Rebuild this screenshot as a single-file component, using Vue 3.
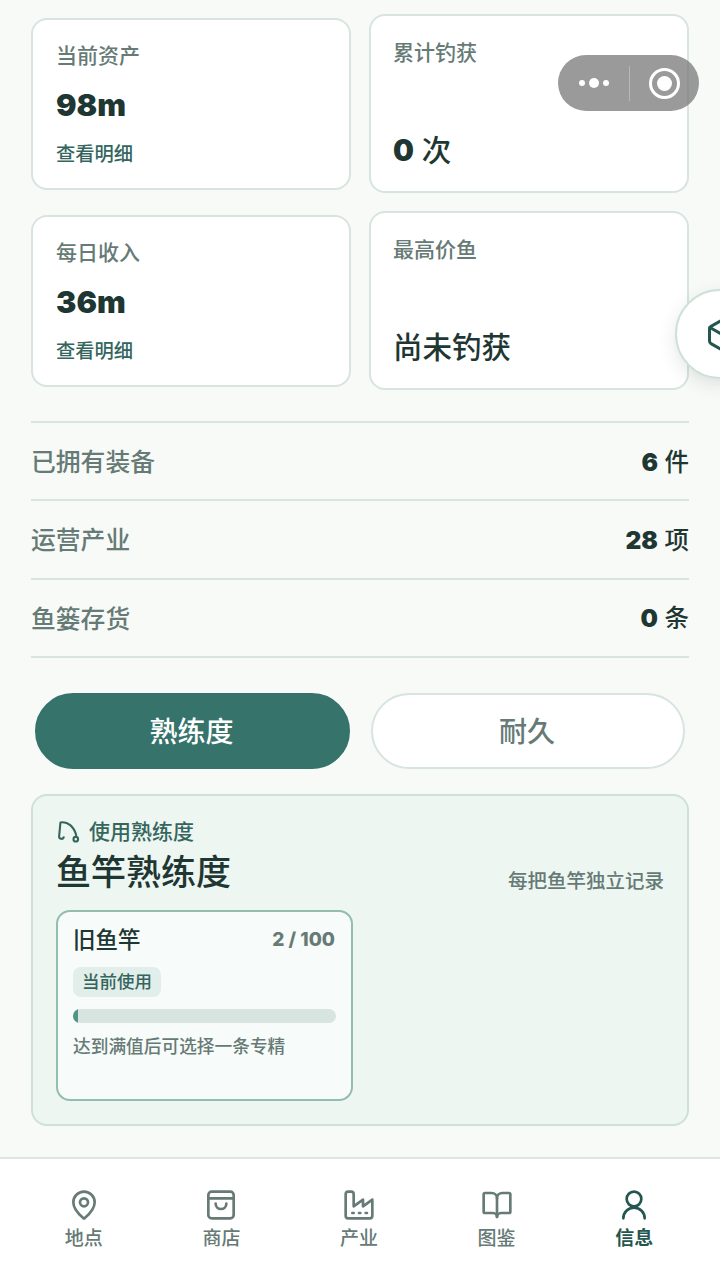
<template>
  <div class="page">
    <main class="content">
      <section class="stats">
        <div class="col col-left">
          <div v-for="item in leftCards" :key="item.label" class="card card-left">
            <div class="card-label">{{ item.label }}</div>
            <div class="card-money">{{ item.value }}</div>
            <div class="card-link">查看明细</div>
          </div>
        </div>
        <div class="col col-right">
          <div class="card card-right">
            <div class="card-label">累计钓获</div>
            <div class="card-big"><b>0</b> 次</div>
          </div>
          <div class="card card-right">
            <div class="card-label">最高价鱼</div>
            <div class="card-big">尚未钓获</div>
          </div>
        </div>
      </section>

      <section class="rows">
        <div v-for="row in rows" :key="row.label" class="row">
          <span class="row-label">{{ row.label }}</span>
          <span class="row-value"><b>{{ row.num }}</b> {{ row.unit }}</span>
        </div>
      </section>

      <section class="tabs">
        <div class="tab active">熟练度</div>
        <div class="tab">耐久</div>
      </section>

      <section class="panel">
        <div class="panel-head">
          <div>
            <div class="eyebrow">
              <svg class="hook" viewBox="0 0 24 24" fill="none" stroke="currentColor" stroke-width="2.2" stroke-linecap="round" stroke-linejoin="round">
                <path d="M7 18c-1 2.6-4.8 2-4.8-.8L3.6 2.6C11 1 18 7 20 16" />
                <circle cx="19.6" cy="20" r="2.4" />
              </svg>
              <span>使用熟练度</span>
            </div>
            <div class="panel-title">鱼竿熟练度</div>
          </div>
          <div class="panel-note">每把鱼竿独立记录</div>
        </div>

        <div class="rod">
          <div class="rod-top">
            <span class="rod-name">旧鱼竿</span>
            <span class="rod-count">2 / 100</span>
          </div>
          <span class="chip">当前使用</span>
          <div class="bar">
            <div class="bar-fill" :style="{ width: progress + '%' }"></div>
          </div>
          <div class="rod-hint">达到满值后可选择一条专精</div>
        </div>
      </section>
    </main>

    <nav class="nav">
      <div class="nav-item">
        <svg viewBox="0 0 24 24" fill="none" stroke="currentColor" stroke-width="2" stroke-linecap="round" stroke-linejoin="round">
          <path d="M20 10c0 5-5.5 10.2-7.4 11.8a1 1 0 0 1-1.2 0C9.5 20.2 4 15 4 10a8 8 0 0 1 16 0" />
          <circle cx="12" cy="10" r="3" />
        </svg>
        <span>地点</span>
      </div>
      <div class="nav-item">
        <svg viewBox="0 0 24 24" fill="none" stroke="currentColor" stroke-width="2" stroke-linecap="round" stroke-linejoin="round">
          <rect x="2.5" y="2" width="19" height="20" rx="2.5" />
          <path d="M2.5 7h19" />
          <path d="M16 11a4 4 0 0 1-8 0" />
        </svg>
        <span>商店</span>
      </div>
      <div class="nav-item">
        <svg viewBox="0 0 24 24" fill="none" stroke="currentColor" stroke-width="2" stroke-linecap="round" stroke-linejoin="round">
          <path d="M2 20a2 2 0 0 0 2 2h16a2 2 0 0 0 2-2V8l-7 5V8l-7 5V4a2 2 0 0 0-2-2H4a2 2 0 0 0-2 2Z" />
          <path d="M17 18h1M12 18h1M7 18h1" />
        </svg>
        <span>产业</span>
      </div>
      <div class="nav-item">
        <svg viewBox="0 0 24 24" fill="none" stroke="currentColor" stroke-width="2" stroke-linecap="round" stroke-linejoin="round">
          <path d="M12 7v14" />
          <path d="M3 18a1 1 0 0 1-1-1V4a1 1 0 0 1 1-1h5a4 4 0 0 1 4 4 4 4 0 0 1 4-4h5a1 1 0 0 1 1 1v13a1 1 0 0 1-1 1h-6a3 3 0 0 0-3 3 3 3 0 0 0-3-3z" />
        </svg>
        <span>图鉴</span>
      </div>
      <div class="nav-item on">
        <svg viewBox="0 0 24 24" fill="none" stroke="currentColor" stroke-width="2" stroke-linecap="round" stroke-linejoin="round">
          <path d="M20 22a8 8 0 0 0-16 0" />
          <circle cx="12" cy="7.5" r="5.5" />
        </svg>
        <span>信息</span>
      </div>
    </nav>

    <!-- wechat capsule sits over the page -->
    <div class="capsule">
      <div class="capsule-dots"><i></i><i class="mid"></i><i></i></div>
      <div class="capsule-line"></div>
      <div class="capsule-ring"><i></i></div>
    </div>

    <div class="fab">
      <svg viewBox="0 0 24 24" fill="none" stroke="currentColor" stroke-width="2" stroke-linecap="round" stroke-linejoin="round">
        <path d="M21 8a2 2 0 0 0-1-1.73l-7-4a2 2 0 0 0-2 0l-7 4A2 2 0 0 0 3 8v8a2 2 0 0 0 1 1.73l7 4a2 2 0 0 0 2 0l7-4A2 2 0 0 0 21 16Z" />
        <path d="m3.3 7 8.7 5 8.7-5" />
        <path d="M12 22V12" />
      </svg>
    </div>
  </div>
</template>

<script setup>
const leftCards = [
  { label: '当前资产', value: '98m' },
  { label: '每日收入', value: '36m' },
]

const rows = [
  { label: '已拥有装备', num: '6', unit: '件' },
  { label: '运营产业', num: '28', unit: '项' },
  { label: '鱼篓存货', num: '0', unit: '条' },
]

const progress = 2
</script>

<style>
html,
body {
  margin: 0;
  background: #f8faf8;
}
</style>

<style scoped>
.page {
  position: relative;
  width: 720px;
  height: 1280px;
  overflow: hidden;
  display: flex;
  flex-direction: column;
  background: #f8faf8;
  color: #1f3733;
  font-family: Inter, "Noto Sans CJK SC", sans-serif;
}

.content {
  flex: 1;
  padding: 0 31px;
}

/* stat cards */
.stats {
  display: grid;
  grid-template-columns: 320px 320px;
  column-gap: 18px;
}

.col {
  display: flex;
  flex-direction: column;
}

.col-left {
  padding-top: 18px;
  gap: 25px;
}

.col-right {
  padding-top: 14px;
  gap: 18px;
}

.card {
  box-sizing: border-box;
  background: #fff;
  border: 2px solid #d7e4df;
  border-radius: 16px;
  display: flex;
  flex-direction: column;
}

.card-left {
  height: 172px;
  padding: 21.5px 23px 0;
}

.card-right {
  height: 179px;
  padding: 22.5px 22px 0;
}

.card-label {
  font-size: 21px;
  line-height: 28px;
  font-weight: 500;
  color: #667a76;
}

.card-money {
  margin-top: 16px;
  font-size: 30.5px;
  line-height: 38px;
  font-weight: 900;
}

.card-link {
  margin-top: 17px;
  font-size: 19.3px;
  line-height: 26px;
  font-weight: 500;
  color: #35665e;
}

.card-big {
  margin-top: auto;
  margin-bottom: 21px;
  font-size: 29.5px;
  line-height: 40px;
  font-weight: 500;
}

.card-big b {
  font-weight: 900;
}

/* summary rows */
.rows {
  margin-top: 31px;
  border-top: 2px solid #d8e4df;
}

.row {
  box-sizing: border-box;
  height: 78.25px;
  padding-bottom: 2px;
  display: flex;
  align-items: center;
  justify-content: space-between;
  border-bottom: 2px solid #d8e4df;
}

.row-label {
  font-size: 24.8px;
  font-weight: 500;
  color: #667a76;
}

.row-value {
  font-size: 24.5px;
  font-weight: 500;
}

.row-value b {
  font-weight: 900;
}

/* tabs */
.tabs {
  margin-top: 35px;
  padding: 0 4px;
  display: grid;
  grid-template-columns: 315px 314px;
  column-gap: 21px;
}

.tab {
  box-sizing: border-box;
  height: 76px;
  padding: 0 2px 2px 0;
  border-radius: 38px;
  display: flex;
  align-items: center;
  justify-content: center;
  background: #fff;
  border: 2px solid #d7e4df;
  color: #667a76;
  font-size: 28px;
  font-weight: 500;
}

.tab.active {
  background: #35736b;
  border-color: #35736b;
  color: #fff;
}

/* rod panel */
.panel {
  box-sizing: border-box;
  height: 332px;
  margin-top: 25px;
  padding: 22px 23px 0;
  background: #eef6f2;
  border: 2px solid #cfe0d9;
  border-radius: 16px;
}

.panel-head {
  display: flex;
  justify-content: space-between;
  align-items: flex-end;
}

.eyebrow {
  margin-left: 1px;
  display: flex;
  align-items: center;
  gap: 9px;
  font-size: 21px;
  line-height: 28px;
  font-weight: 500;
  color: #35665e;
}

.hook {
  width: 23px;
  height: 23px;
}

.panel-title {
  margin-top: 1px;
  font-size: 35px;
  line-height: 50px;
  font-weight: 500;
}

.panel-note {
  margin-bottom: 2px;
  font-size: 19.5px;
  line-height: 28px;
  font-weight: 500;
  color: #667a76;
}

.rod {
  box-sizing: border-box;
  width: 297px;
  height: 191px;
  margin-top: 13px;
  padding: 11px 15px 0;
  background: #f7fbf9;
  border: 2px solid #93bdb0;
  border-radius: 14px;
}

.rod-top {
  display: flex;
  align-items: center;
  justify-content: space-between;
}

.rod-name {
  font-size: 22.5px;
  line-height: 34px;
  font-weight: 500;
}

.rod-count {
  margin-right: 1px;
  font-size: 19px;
  font-weight: 800;
  color: #667a76;
}

.chip {
  display: inline-block;
  margin-top: 10px;
  padding: 0 9px;
  height: 30px;
  line-height: 30px;
  border-radius: 8px;
  background: #e2eeea;
  font-size: 17.5px;
  font-weight: 500;
  color: #35665e;
}

.bar {
  height: 14px;
  margin-top: 12px;
  border-radius: 7px;
  background: #d8e4df;
  overflow: hidden;
}

.bar-fill {
  height: 100%;
  background: #4f9585;
}

.rod-hint {
  margin-top: 11px;
  font-size: 17.7px;
  line-height: 26px;
  font-weight: 500;
  color: #667a76;
}

/* bottom nav */
.nav {
  box-sizing: border-box;
  height: 123px;
  padding: 30px 15px 0;
  display: grid;
  grid-template-columns: repeat(5, 137.6px);
  background: #fff;
  border-top: 2px solid #dde6e2;
}

.nav-item {
  display: flex;
  flex-direction: column;
  align-items: center;
  color: #667a76;
  font-size: 19px;
  font-weight: 500;
}

.nav-item svg {
  width: 32px;
  height: 32px;
}

.nav-item span {
  margin-top: 5px;
  line-height: 26px;
}

.nav-item.on {
  color: #24554e;
  font-weight: 700;
}

/* overlays */
.capsule {
  position: absolute;
  left: 558px;
  top: 55px;
  width: 141px;
  height: 56px;
  border-radius: 28px;
  background: rgba(115, 115, 115, 0.72);
  display: flex;
  align-items: center;
}

.capsule-dots {
  width: 71px;
  display: flex;
  align-items: center;
  justify-content: center;
  gap: 4px;
}

.capsule-dots i {
  width: 6px;
  height: 6px;
  border-radius: 50%;
  background: #fff;
}

.capsule-dots i.mid {
  width: 10px;
  height: 10px;
}

.capsule-line {
  width: 1px;
  height: 35px;
  background: rgba(255, 255, 255, 0.3);
}

.capsule-ring {
  box-sizing: border-box;
  width: 31px;
  height: 31px;
  margin-left: 19px;
  border: 3px solid #fff;
  border-radius: 50%;
  display: flex;
  align-items: center;
  justify-content: center;
}

.capsule-ring i {
  width: 15px;
  height: 15px;
  border-radius: 50%;
  background: #fff;
}

.fab {
  position: absolute;
  left: 675px;
  top: 289px;
  box-sizing: border-box;
  width: 90px;
  height: 90px;
  border-radius: 50%;
  background: #fff;
  border: 2px solid #cfe0d9;
  box-shadow: 0 6px 18px rgba(31, 55, 51, 0.12);
  color: #24554e;
}

.fab svg {
  position: absolute;
  left: 28px;
  top: 26px;
  width: 36px;
  height: 36px;
}
</style>
